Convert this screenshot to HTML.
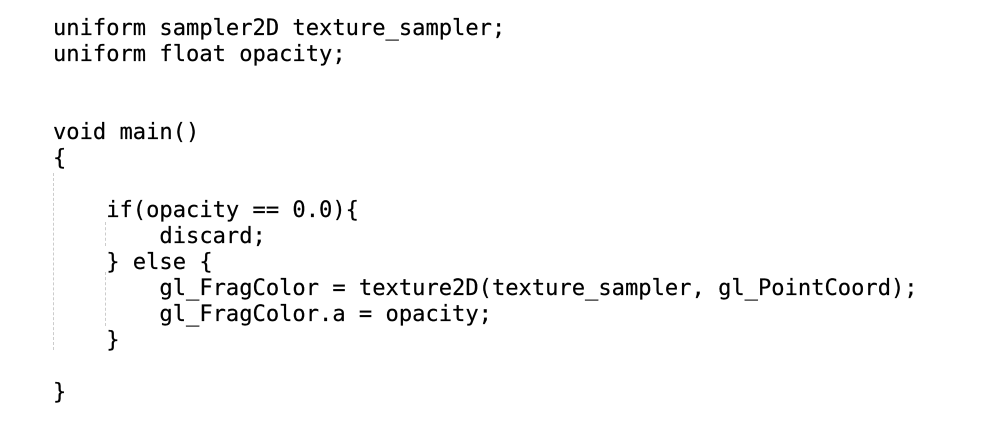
<!DOCTYPE html>
<html><head><style>
html,body{margin:0;padding:0;background:#fff;width:988px;height:430px;overflow:hidden}
pre{position:absolute;left:53px;top:15px;margin:0;font-family:"DejaVu Sans Mono","Liberation Mono",monospace;font-size:22.1px;line-height:26px;color:#000;-webkit-text-stroke:0.2px #000}
.g{position:absolute;border-left:1px dashed #ccc;width:0}
</style></head><body>
<div class="g" style="left:53px;top:173px;height:177px"></div>
<div class="g" style="left:105px;top:222px;height:24px"></div>
<div class="g" style="left:105px;top:272px;height:54px"></div>
<pre>uniform sampler2D texture_sampler;
uniform float opacity;


void main()
{

    if(opacity == 0.0){
        discard;
    } else {
        gl_FragColor = texture2D(texture_sampler, gl_PointCoord);
        gl_FragColor.a = opacity;
    }

}</pre>
</body></html>
